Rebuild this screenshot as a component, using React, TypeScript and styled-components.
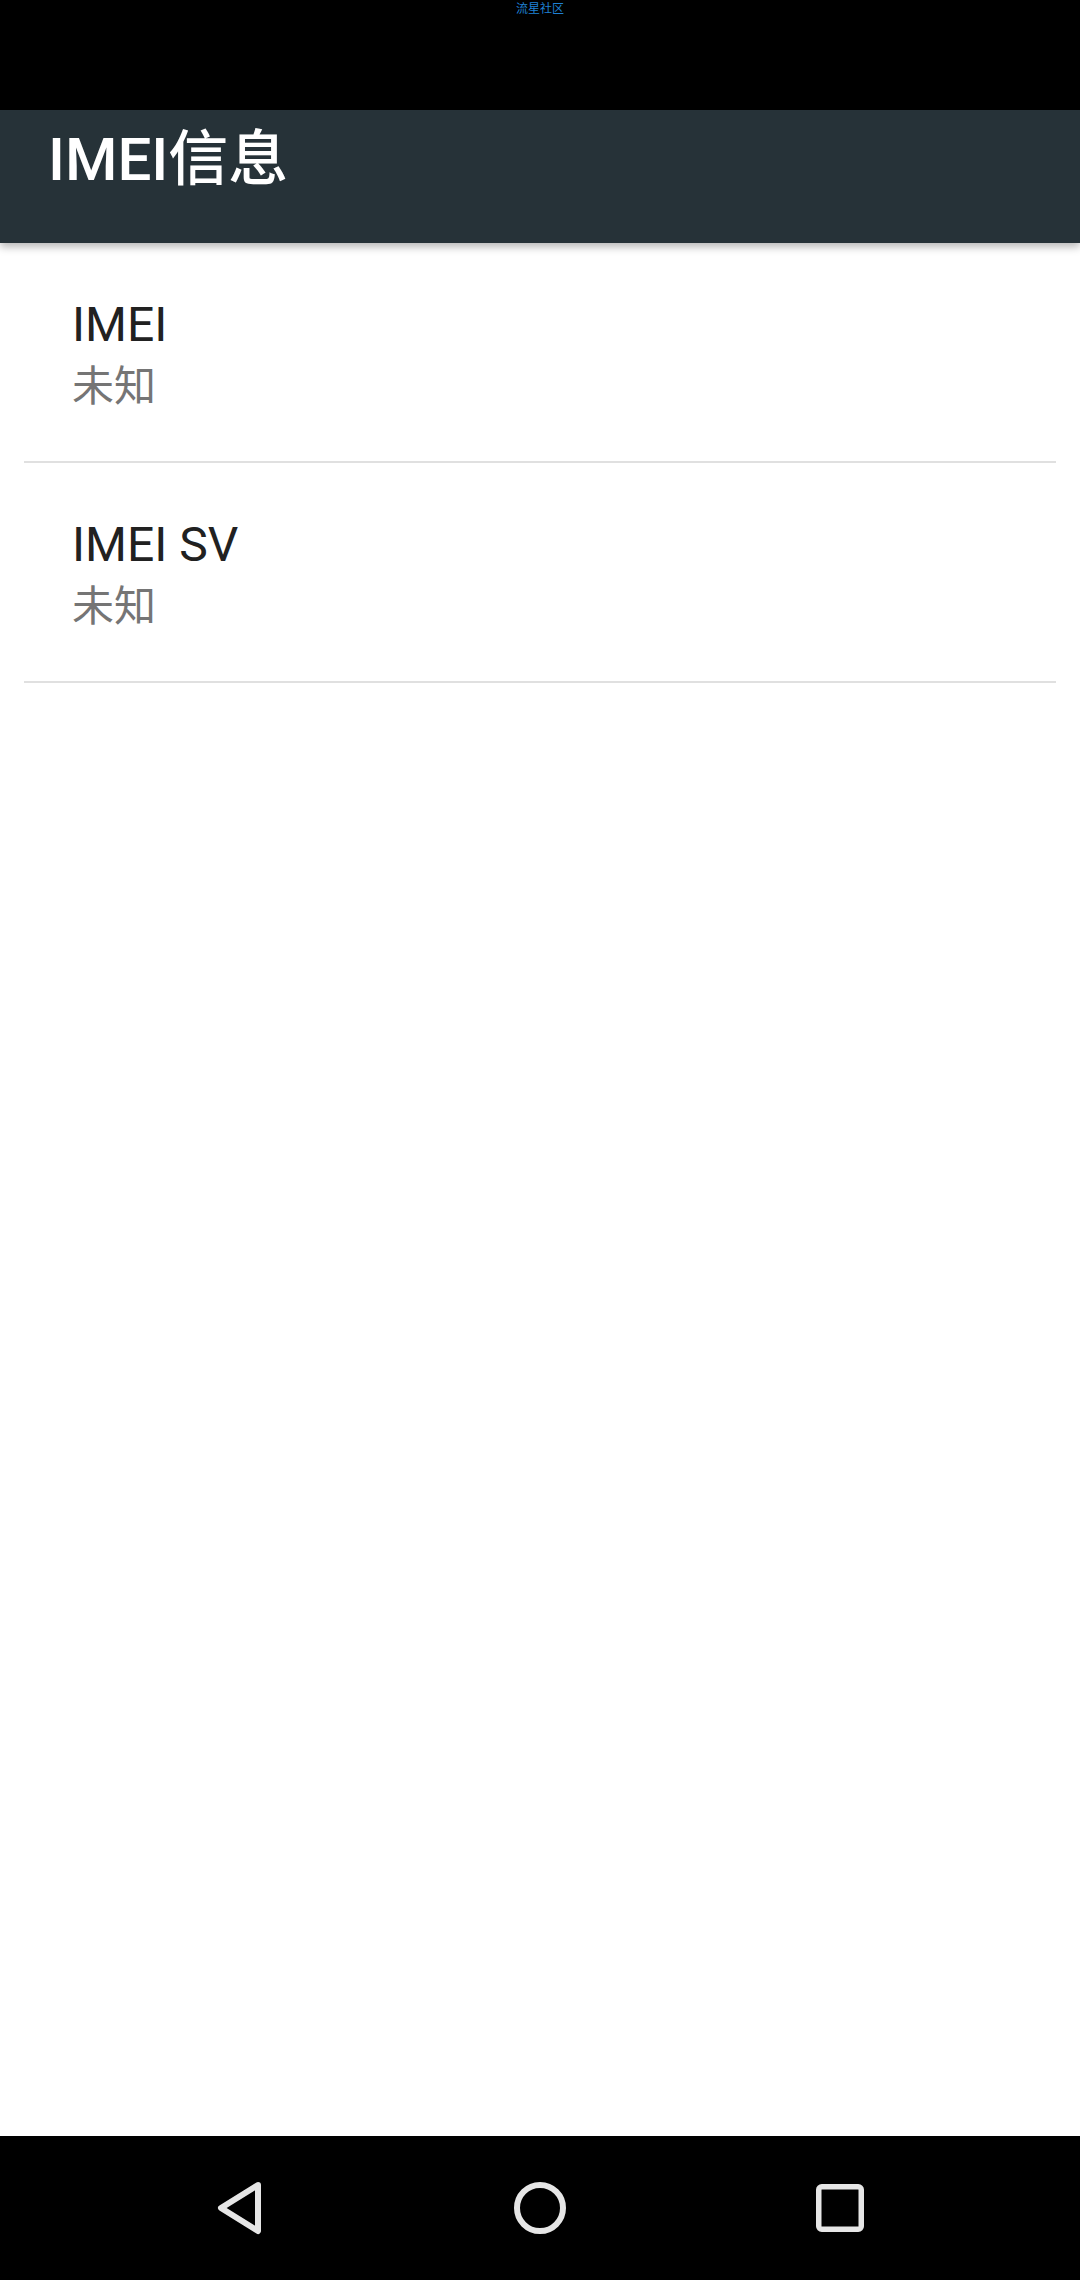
import styled, { createGlobalStyle } from "styled-components";

const GlobalStyle = createGlobalStyle`
  html,
  body {
    margin: 0;
    padding: 0;
    background: #ffffff;
  }
  * {
    box-sizing: border-box;
  }
`;

const Screen = styled.div`
  display: flex;
  flex-direction: column;
  width: 1080px;
  height: 2280px;
  background: #ffffff;
  font-family: Roboto, "Noto Sans CJK SC", sans-serif;
  overflow: hidden;
`;

const StatusBar = styled.div`
  display: flex;
  justify-content: center;
  height: 110px;
  flex-shrink: 0;
  padding-top: 1px;
  background: #000000;
`;

const Watermark = styled.span`
  font-family: "Noto Sans CJK SC", sans-serif;
  font-size: 12px;
  line-height: 14px;
  color: #1f80d4;
`;

const Toolbar = styled.header`
  position: relative;
  z-index: 1;
  height: 133px;
  flex-shrink: 0;
  padding: 20px 48px 0;
  background: #263238;
  box-shadow: 0 4px 8px rgba(0, 0, 0, 0.28);
`;

const Title = styled.h1`
  margin: 0;
  font-family: Roboto, "Noto Sans CJK SC", sans-serif;
  font-size: 60px;
  font-weight: 500;
  line-height: 60px;
  color: #ffffff;
`;

const List = styled.main`
  flex: 1;
  display: flex;
  flex-direction: column;
  background: #ffffff;
`;

const Item = styled.div`
  display: flex;
  flex-direction: column;
  gap: 5px;
  height: 218px;
  padding: 54px 72px 0;
`;

const ItemTitle = styled.div`
  font-family: Roboto, sans-serif;
  font-size: 48px;
  line-height: 56px;
  color: #212121;
`;

const ItemSummary = styled.div`
  font-family: "Noto Sans CJK SC", sans-serif;
  font-size: 42px;
  line-height: 50px;
  color: #757575;
`;

const Divider = styled.div`
  height: 2px;
  margin: 0 24px;
  background: #e0e0e0;
`;

const NavBar = styled.nav`
  display: grid;
  grid-template-columns: repeat(3, 300px);
  justify-content: center;
  align-items: center;
  height: 144px;
  flex-shrink: 0;
  background: #000000;
`;

const NavButton = styled.div`
  display: flex;
  justify-content: center;
  align-items: center;
  svg {
    display: block;
  }
`;

const ICON_COLOR = "#e6e6e6";

const BackIcon = () => (
  <svg width="60" height="60" viewBox="0 0 60 60">
    <path
      d="M48 7 L11 30 L48 53 Z"
      fill="none"
      stroke={ICON_COLOR}
      strokeWidth="6"
      strokeLinejoin="round"
    />
  </svg>
);

const HomeIcon = () => (
  <svg width="60" height="60" viewBox="0 0 60 60">
    <circle cx="30" cy="30" r="23" fill="none" stroke={ICON_COLOR} strokeWidth="6" />
  </svg>
);

const RecentsIcon = () => (
  <svg width="60" height="60" viewBox="0 0 60 60">
    <rect
      x="8.75"
      y="8.75"
      width="42.5"
      height="42.5"
      rx="3"
      fill="none"
      stroke={ICON_COLOR}
      strokeWidth="5.5"
    />
  </svg>
);

const ITEMS = [
  { title: "IMEI", summary: "未知" },
  { title: "IMEI SV", summary: "未知" },
];

const App = () => {
  return (
    <>
      <GlobalStyle />
      <Screen>
        <StatusBar>
          <Watermark>流星社区</Watermark>
        </StatusBar>
        <Toolbar>
          <Title>IMEI信息</Title>
        </Toolbar>
        <List>
          {ITEMS.map((item) => (
            <div key={item.title}>
              <Item>
                <ItemTitle>{item.title}</ItemTitle>
                <ItemSummary>{item.summary}</ItemSummary>
              </Item>
              <Divider />
            </div>
          ))}
        </List>
        <NavBar>
          <NavButton>
            <BackIcon />
          </NavButton>
          <NavButton>
            <HomeIcon />
          </NavButton>
          <NavButton>
            <RecentsIcon />
          </NavButton>
        </NavBar>
      </Screen>
    </>
  );
};

export default App;
